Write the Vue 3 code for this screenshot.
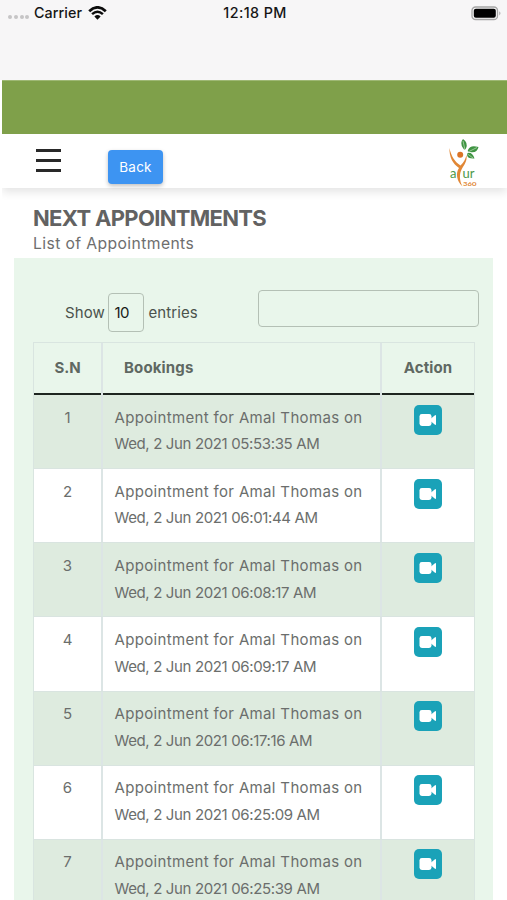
<script setup>
const bookings = [
  'Wed, 2 Jun 2021 05:53:35 AM',
  'Wed, 2 Jun 2021 06:01:44 AM',
  'Wed, 2 Jun 2021 06:08:17 AM',
  'Wed, 2 Jun 2021 06:09:17 AM',
  'Wed, 2 Jun 2021 06:17:16 AM',
  'Wed, 2 Jun 2021 06:25:09 AM',
  'Wed, 2 Jun 2021 06:25:39 AM',
]
</script>

<template>
  <div class="screen">
    <header class="status">
      <div class="carrier">
        <span class="dots"><i></i><i></i><i></i><i></i></span>
        <span class="carrier-name">Carrier</span>
        <svg class="wifi" width="19" height="14" viewBox="0 0 19 14" fill="none" stroke="#0c0c0c">
          <path d="M1.2 5.2Q9.5 -2.4 17.8 5.2" stroke-width="2.8" />
          <path d="M4.1 8.2Q9.5 3.2 14.9 8.2" stroke-width="2.5" />
          <path d="M6.4 10.5Q9.5 7.6 12.6 10.5L9.5 13.7Z" fill="#0c0c0c" stroke="none" />
        </svg>
      </div>
      <span class="time">12:18 PM</span>
      <svg class="battery" width="31" height="15" viewBox="0 0 31 15">
        <rect x="1" y="1" width="25.5" height="12.5" rx="3.6" fill="#f7f6f7" stroke="#a5a5a5" stroke-width="1.3" />
        <rect x="2.8" y="2.8" width="22" height="9" rx="2" fill="#000" />
        <path d="M28.3 5.2Q30.6 7.2 28.3 9.4Z" fill="#a5a5a5" />
      </svg>
    </header>
    <div class="page">
      <div class="banner"></div>
      <nav class="nav">
        <div class="menu"><b></b><b></b><b></b></div>
        <button class="back">Back</button>
        <svg class="logo" width="34" height="50" viewBox="0 0 34 50">
          <path d="M2.5 10C4 18 8 24 13.5 27.5C17 24 18.5 21 19.5 17C20.5 23 17 27 14.8 31C12 36 12.5 43 15.5 48.5C9.5 43 8.5 35 12 30C6 26 2 19 2.5 10Z" fill="#e18735" />
          <circle cx="13.2" cy="16.7" r="3" fill="#db7427" />
          <path d="M16 10Q12.5 5 16 1Q21.5 4.8 19 10.5Q17.5 13 16 10Z" fill="#3f9443" />
          <path d="M21 12Q23 6.5 31.5 9Q30 15.5 23 14Q20 14 21 12Z" fill="#3f9443" />
          <path d="M20.5 15Q25.5 14 27.5 20.5Q20.5 21 20 17Z" fill="#3f9443" />
          <path d="M18 12L16 3M21 14L30 9.5M20.5 16L26 20" stroke="#d6edcf" stroke-width=".6" />
          <text x="3" y="39.5" class="logo-name" textLength="7">a</text>
          <text x="15.5" y="39.5" class="logo-name" textLength="12">ur</text>
          <text x="16" y="47.5" class="logo-number" textLength="13.5" lengthAdjust="spacingAndGlyphs">360</text>
        </svg>
      </nav>
      <main>
        <h1>NEXT APPOINTMENTS</h1>
        <p class="subtitle">List of Appointments</p>
        <section class="panel">
          <div class="controls">
            <label class="entries"><span>Show</span><span class="select">10</span><span>entries</span></label>
            <input class="search" aria-label="Search" />
          </div>
          <div class="table">
            <div class="row head">
              <div class="cell center">S.N</div>
              <div class="cell booking">Bookings</div>
              <div class="cell center last">Action</div>
            </div>
            <div v-for="(date, i) in bookings" :key="date" class="row">
              <div class="cell center">{{ i + 1 }}</div>
              <div class="cell booking"><span class="line who">Appointment for Amal Thomas on</span><span class="line">{{ date }}</span></div>
              <div class="cell last">
                <span class="video">
                  <svg width="18" height="14" viewBox="0 0 18 14" fill="#fff">
                    <rect x=".5" y="1" width="12" height="12" rx="2.4" />
                    <path d="M11.7 5.7L16 2.2Q17 1.8 17 2.8V11.2Q17 12.2 16 11.8L11.7 8.3Z" />
                  </svg>
                </span>
              </div>
            </div>
          </div>
        </section>
      </main>
    </div>
  </div>
</template>

<style>
body { margin: 0; overflow: hidden; }
</style>

<style scoped>
* { box-sizing: border-box; }
.screen { width: 507px; height: 900px; overflow: hidden; background: #fff; font-family: Inter, "Liberation Sans", sans-serif; color: #6b6e6c; }
.status { height: 80px; padding: 3px 5px 0 8px; background: #f7f6f7; display: grid; grid-template-columns: 1fr auto 1fr; align-items: start; color: #151515; font-size: 14.3px; font-weight: 500; line-height: 20px; }
.carrier { display: flex; align-items: center; }
.dots { display: flex; gap: 1.8px; padding-top: 8px; margin-right: 4.5px; }
.dots i { width: 4px; height: 4px; border-radius: 50%; background: #c6c5c6; }
.carrier-name { letter-spacing: .1px; }
.wifi { margin: 0 0 1px 5.5px; }
.time { letter-spacing: .42px; }
.battery { justify-self: end; margin-top: 3px; }
.page { margin-left: 2px; }
.banner { height: 54px; background: #7fa04a; border-top: 1px solid #9eb874; }
.nav { height: 54px; display: flex; align-items: flex-start; padding: 0 26px 0 34px; background: #fff; box-shadow: 0 4px 9px rgba(0, 0, 0, .11); clip-path: inset(0 0 -20px 0); }
.menu { width: 25px; margin-top: 15px; display: grid; gap: 7.5px; }
.menu b { height: 2.5px; background: #292929; }
.back { width: 55px; height: 34px; margin: 16px 0 0 47px; padding: 0; border: 0; border-radius: 4px; background: #3d94f2; box-shadow: 0 2px 4px rgba(0, 0, 0, .25); color: #fff; font: 400 13.5px/34px Inter, sans-serif; letter-spacing: .2px; }
.logo { margin: 4px 0 0 auto; }
.logo-name { fill: #4b9948; font: 400 13px Lato, sans-serif; }
.logo-number { fill: #e18735; font: 700 5.8px Lato, sans-serif; }
h1 { margin: 17px 0 0 31px; font-size: 22px; line-height: 26px; font-weight: 700; letter-spacing: -.68px; color: #626262; white-space: nowrap; }
.subtitle { margin: 0 0 0 31px; font-size: 15.7px; line-height: 25px; letter-spacing: .4px; height: 27px; color: #6e6e6e; }
.panel { width: 479px; margin-left: 12px; padding: 32px 14px 0 19px; background: #e9f6eb; }
.controls { display: flex; justify-content: space-between; height: 52px; padding-left: 32px; }
.entries { display: flex; height: 45px; align-items: center; font-size: 15px; letter-spacing: .1px; color: #4b524c; }
.select { width: 36px; height: 39px; margin: 0 4px 0 3.5px; padding-left: 5px; border: 1.5px solid #b4c0b5; border-radius: 4px; line-height: 37px; color: #171a17; letter-spacing: -.5px; }
.search { width: 221px; height: 37px; border: 1.5px solid #b4c0b5; border-radius: 4px; background: transparent; }
.table { width: 442px; border: 1px solid #d9e5e0; }
.row { display: grid; grid-template-columns: 69px 279px 1fr; height: 74.15px; border-bottom: 1px solid #d9e4e0; font-size: 15px; line-height: 26.7px; background: #fff; }
.row:nth-child(even) { background: #deebdf; }
.head { height: 52px; background: #e9f6eb; font-weight: 700; line-height: 50px; border-bottom: 0; color: #5f6862; }
.cell { border-right: 2px solid #dce5e5; padding-top: 9.6px; }
.head .cell { padding-top: 0; background: linear-gradient(#1e2520, #1e2520) bottom / 100% 2px no-repeat content-box; }
.center { text-align: center; }
.head .center { letter-spacing: -.1px; }
.booking { padding-left: 11.5px; }
.head .booking { padding-left: 21px; background-origin: border-box; background-clip: padding-box; letter-spacing: .15px; }
.cell.last { border-right: 0; text-align: center; padding-right: 1px; }
.head .cell.last { padding-right: 0; letter-spacing: .1px; }
.line { display: block; white-space: nowrap; letter-spacing: -.36px; }
.who { letter-spacing: .34px; }
.video { display: inline-flex; width: 28px; height: 30px; align-items: center; justify-content: center; border-radius: 5px; background: #1aa2b8; }
</style>
